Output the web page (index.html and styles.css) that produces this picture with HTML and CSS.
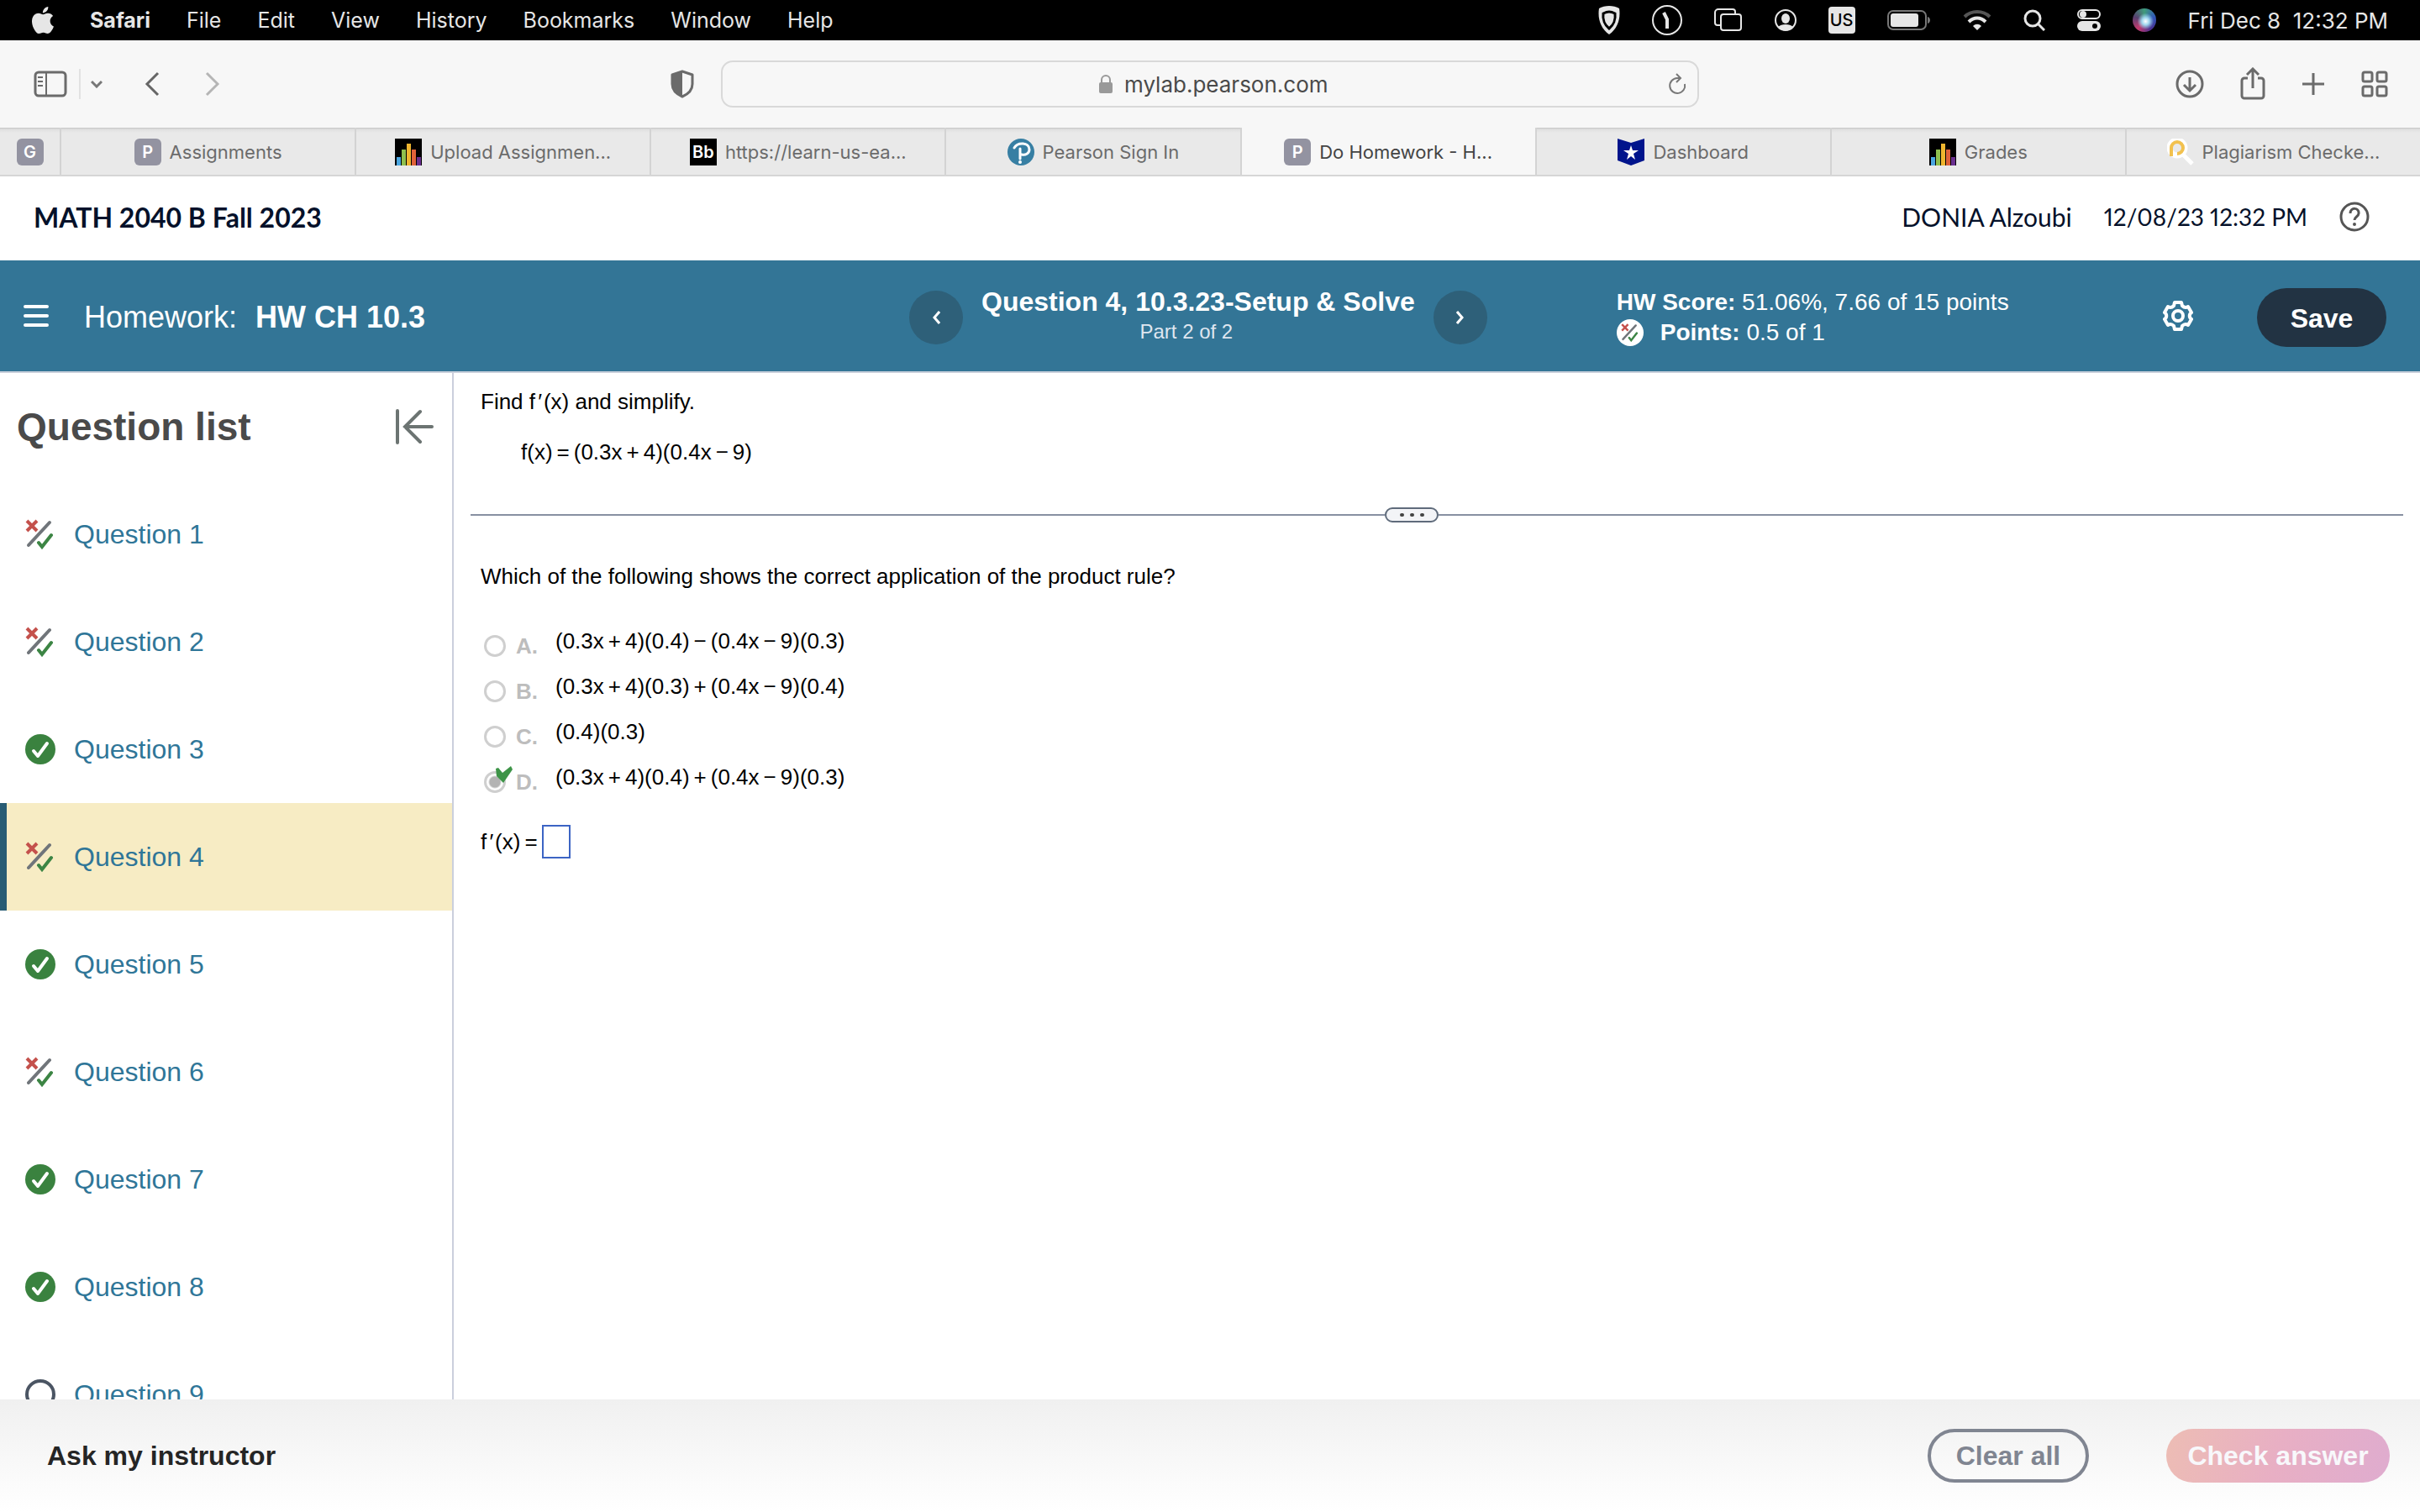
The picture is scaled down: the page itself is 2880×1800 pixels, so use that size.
FILE: index.html
```
<!DOCTYPE html>
<html lang="en">
<head>
  <meta charset="UTF-8" />
  <meta name="viewport" content="width=device-width, initial-scale=1.0" />
  <title>Do Homework - HW CH 10.3</title>
  <link rel="stylesheet" href="styles.css">
</head>
<body>
  <!-- Shared icons -->
  <svg class="sprite" aria-hidden="true">
    <symbol id="partial" viewBox="0 0 36 36">
      <g fill="none" stroke-linecap="round">
        <path d="M2 2L14 14M14 2L2 14" stroke="#c4514c" stroke-width="4" stroke-linecap="butt" />
        <path d="M29 4L4 31" stroke="#70757a" stroke-width="4" />
        <path d="M16 28L20 33L31 19" stroke="#3c8544" stroke-width="4" />
      </g>
    </symbol>
    <symbol id="correct" viewBox="0 0 36 36">
      <circle cx="18" cy="18" r="18" fill="#3a823f" />
      <path d="M10 20L15 26L26 11" fill="none" stroke="#fff" stroke-width="4" stroke-linecap="round" stroke-linejoin="round" />
    </symbol>
    <symbol id="open" viewBox="0 0 36 36">
      <circle cx="18" cy="18" r="16" fill="none" stroke="#4b5563" stroke-width="4" />
    </symbol>
    <symbol id="bars" viewBox="0 0 32 32">
      <rect width="32" height="32" fill="#000" />
      <rect x="2" y="22" width="5" height="10" fill="#4ba6e0" />
      <rect x="8" y="13" width="5" height="19" fill="#8fc04e" />
      <rect x="14" y="6" width="5" height="26" fill="#efb52f" />
      <rect x="20" y="13" width="5" height="19" fill="#e0623a" />
      <rect x="26" y="22" width="5" height="10" fill="#6a2f8f" />
    </symbol>
  </svg>

  <header class="menubar">
    <nav class="menus">
      <svg class="apple" viewBox="4 2 16 20"><path fill="#e6e6e6" d="M18.71 19.5c-.83 1.24-1.71 2.45-3.05 2.47-1.34.03-1.77-.79-3.29-.79-1.53 0-2 .77-3.27.82-1.31.05-2.3-1.32-3.14-2.53C4.25 17 2.94 12.45 4.7 9.39c.87-1.52 2.43-2.48 4.12-2.51 1.28-.02 2.5.87 3.29.87.78 0 2.26-1.07 3.81-.91.65.03 2.47.26 3.64 1.98-.09.06-2.17 1.28-2.15 3.81.03 3.02 2.65 4.03 2.68 4.04-.03.07-.42 1.44-1.38 2.83M13 3.5c.73-.83 1.94-1.46 2.94-1.5.13 1.17-.34 2.35-1.04 3.19-.69.85-1.83 1.51-2.95 1.42-.15-1.15.41-2.35 1.05-3.11z" /></svg>
      <b>Safari</b>
      <span>File</span>
      <span>Edit</span>
      <span>View</span>
      <span>History</span>
      <span>Bookmarks</span>
      <span>Window</span>
      <span>Help</span>
    </nav>
    <div class="status">
      <svg width="26" height="34" viewBox="0 0 26 34"><path d="M13 0C17 0 22 1 25 3C27 15 23 27 13 34C3 27 -1 15 1 3C4 1 9 0 13 0Z" fill="#e6e6e6" /><path d="M13 7C16 7 18 8 20 9C21 16 18 23 13 27C8 23 5 16 6 9C8 8 10 7 13 7Z" fill="#e6e6e6" stroke="#000" stroke-width="3" /></svg>
      <svg width="36" height="36" viewBox="0 0 36 36"><circle cx="18" cy="18" r="17" fill="none" stroke="#e6e6e6" stroke-width="2" /><path d="M14 9L18 17V28" fill="none" stroke="#e6e6e6" stroke-width="4" /></svg>
      <svg width="34" height="28" viewBox="0 0 34 28" fill="none" stroke="#e6e6e6" stroke-width="2"><path d="M7 20H4a3 3 0 0 1-3-3V5a4 4 0 0 1 4-4H22a3 3 0 0 1 3 3V7" /><rect x="8" y="7" width="24" height="19" rx="3" /></svg>
      <svg width="26" height="26" viewBox="0 0 26 26"><circle cx="13" cy="13" r="12" fill="none" stroke="#e6e6e6" stroke-width="2" /><ellipse cx="13" cy="11" rx="5" ry="6" fill="#e6e6e6" /><path d="M4 21C8 17 18 17 22 21C18 27 8 27 4 21Z" fill="#e6e6e6" /></svg>
      <span class="lang">US</span>
      <svg width="52" height="24" viewBox="0 0 52 24"><rect x="1" y="1" width="45" height="22" rx="6" fill="none" stroke="#777" stroke-width="2" /><rect x="4" y="4" width="33" height="16" rx="3" fill="#e6e6e6" /><path d="M48 8C52 9 52 15 48 16Z" fill="#777" /></svg>
      <svg width="34" height="26" viewBox="0 0 34 26" fill="none" stroke-width="4"><path d="M2 9C10 1 24 1 32 9" stroke="#555" /><path d="M7 15C13 9 21 9 27 15" stroke="#e6e6e6" /><path d="M12 20C15 17 19 17 22 20L17 25Z" fill="#e6e6e6" /></svg>
      <svg width="26" height="26" viewBox="0 0 26 26" fill="none" stroke="#e6e6e6"><circle cx="11" cy="11" r="9" stroke-width="3" /><path d="M18 18L25 25" stroke-width="3" /></svg>
      <svg width="28" height="28" viewBox="0 0 28 28"><rect x="1" y="2" width="26" height="10" rx="5" fill="none" stroke="#e6e6e6" stroke-width="2" /><circle cx="7" cy="7" r="4" fill="#e6e6e6" /><rect y="15" width="28" height="12" rx="6" fill="#e6e6e6" /><circle cx="21" cy="21" r="3" fill="#000" /></svg>
      <span class="siri"></span>
      <span class="clock">Fri Dec 8&nbsp; 12:32 PM</span>
    </div>
  </header>

  <div class="toolbar">
    <div class="tools">
      <button aria-label="Sidebar"><svg width="40" height="32" viewBox="0 0 40 32" fill="none" stroke="#6b6b6b" stroke-width="3"><rect x="2" y="2" width="36" height="28" rx="4" /><path d="M15 2V30M5 8H11M5 13H11M5 18H11" stroke-width="2" /></svg></button>
      <button class="split" aria-label="Tab groups"><svg width="14" height="10" viewBox="0 0 14 10" fill="none" stroke="#777" stroke-width="3"><path d="M1 2L7 8L13 2" /></svg></button>
      <button class="back" aria-label="Back"><svg width="18" height="30" viewBox="0 0 18 30" fill="none" stroke="#666" stroke-width="3"><path d="M16 2L3 15L16 28" /></svg></button>
      <button class="forward" aria-label="Forward"><svg width="18" height="30" viewBox="0 0 18 30" fill="none" stroke="#b5b5b5" stroke-width="3"><path d="M2 2L15 15L2 28" /></svg></button>
      <button class="privacy" aria-label="Privacy report"><svg width="28" height="34" viewBox="0 0 28 34"><path d="M14 2L26 6V17C26 24 21 29 14 32C7 29 2 24 2 17V6Z" fill="none" stroke="#6b6b6b" stroke-width="3" stroke-linejoin="round" /><path d="M14 2V32C7 29 2 24 2 17V6Z" fill="#6b6b6b" /></svg></button>
    </div>
    <div class="urlbar">
      <svg width="16" height="24" viewBox="0 0 16 24"><path d="M3 12V7a5 5 0 0 1 10 0V12" fill="none" stroke="#999" stroke-width="2" /><rect y="10" width="16" height="13" rx="2" fill="#999" /></svg>
      <input type="text" aria-label="Address" value="mylab.pearson.com">
      <button class="reload" aria-label="Reload"><svg width="24" height="28" viewBox="0 0 24 28" fill="none" stroke="#777" stroke-width="2"><path d="M21 14A9 9 0 1 1 12 7H15M11 2L16 7L11 12" /></svg></button>
    </div>
    <div class="tools right">
      <button aria-label="Downloads"><svg width="34" height="34" viewBox="0 0 34 34" fill="none" stroke="#6b6b6b" stroke-width="3"><circle cx="17" cy="17" r="15" /><path d="M17 9V25M10 18L17 25L24 18" /></svg></button>
      <button aria-label="Share"><svg width="30" height="40" viewBox="0 0 30 40" fill="none" stroke="#6b6b6b" stroke-width="3"><path d="M9 13H5a3 3 0 0 0-3 3V34a3 3 0 0 0 3 3H25a3 3 0 0 0 3-3V16a3 3 0 0 0-3-3H21M15 25V3M8 9L15 2L22 9" /></svg></button>
      <button aria-label="New tab"><svg width="28" height="28" viewBox="0 0 28 28" stroke="#6b6b6b" stroke-width="3"><path d="M14 1V27M1 14H27" /></svg></button>
      <button aria-label="Tab overview"><svg width="32" height="32" viewBox="0 0 32 32" fill="none" stroke="#6b6b6b" stroke-width="3"><rect x="2" y="2" width="11" height="11" rx="2" /><rect x="19" y="2" width="11" height="11" rx="2" /><rect x="2" y="19" width="11" height="11" rx="2" /><rect x="19" y="19" width="11" height="11" rx="2" /></svg></button>
    </div>
  </div>

  <nav class="tabs">
    <a class="tab pinned" href="#" aria-label="G"><span class="favicon">G</span></a>
    <a class="tab" href="#"><span class="favicon">P</span>Assignments</a>
    <a class="tab" href="#"><svg class="fav"><use href="#bars" /></svg>Upload Assignmen...</a>
    <a class="tab" href="#"><span class="favicon black">Bb</span>https://learn-us-ea...</a>
    <a class="tab" href="#"><svg class="fav" viewBox="0 0 32 32"><circle cx="16" cy="16" r="16" fill="#377fa3" /><path d="M8 11C12 4 26 4 26 13C26 18 21 20 17 19M15 12V24" fill="none" stroke="#fff" stroke-width="3" stroke-linecap="round" /><circle cx="15" cy="28" r="2" fill="#fff" /></svg>Pearson Sign In</a>
    <a class="tab active" href="#"><span class="favicon">P</span>Do Homework - H...</a>
    <a class="tab" href="#"><svg class="fav" viewBox="0 0 32 32"><path d="M0 0L16 5L32 0V26L16 32L0 26Z" fill="#00148c" /><path d="M16 8L18 14H25L19 18L21 25L16 21L11 25L13 18L7 14H14Z" fill="#fff" /></svg>Dashboard</a>
    <a class="tab" href="#"><svg class="fav"><use href="#bars" /></svg>Grades</a>
    <a class="tab" href="#"><svg class="fav" viewBox="0 0 32 32" fill="none"><path d="M18 18L30 30" stroke="#fff" stroke-width="5" /><circle cx="12" cy="11" r="9" stroke="#fff" stroke-width="7" /><path d="M5 21V11A7 7 0 1 1 12 18" stroke="#f2c14e" stroke-width="4" /></svg>Plagiarism Checke...</a>
  </nav>

  <div class="course">
    <h1>MATH 2040 B Fall 2023</h1>
    <div class="user">
      <span>DONIA Alzoubi</span>
      <span class="date">12/08/23 12:32 PM</span>
      <button aria-label="Help"><svg width="36" height="36" viewBox="0 0 36 36" fill="none" stroke="#555" stroke-width="3"><circle cx="18" cy="18" r="16" /><path d="M13 14C13 6 24 7 23 14C23 18 18 18 18 22" /><circle cx="18" cy="27" r="1" stroke-width="2" /></svg></button>
    </div>
  </div>

  <div class="hwbar">
    <div class="hw-title">
      <button class="menu" aria-label="Menu"><svg width="30" height="28" viewBox="0 0 30 28" stroke="#fff" stroke-width="4" stroke-linecap="round"><path d="M2 3H28M2 14H28M2 25H28" /></svg></button>
      <h2>Homework:<strong>HW CH 10.3</strong></h2>
    </div>
    <div class="pager">
      <button class="round" aria-label="Previous question"><svg width="10" height="16" viewBox="0 0 10 16" fill="none" stroke="#fff" stroke-width="3"><path d="M9 1L3 8L9 15" /></svg></button>
      <div class="pager-text">
        <strong>Question 4, 10.3.23-Setup &amp; Solve</strong>
        <span>Part 2 of 2</span>
      </div>
      <button class="round" aria-label="Next question"><svg width="10" height="16" viewBox="0 0 10 16" fill="none" stroke="#fff" stroke-width="3"><path d="M1 1L7 8L1 15" /></svg></button>
    </div>
    <div class="score">
      <div><b>HW Score:</b> 51.06%, 7.66 of 15 points</div>
      <div class="points"><span class="badge"><svg width="22" height="22"><use href="#partial" /></svg></span><span><b>Points:</b> 0.5 of 1</span></div>
    </div>
    <button class="gear" aria-label="Settings"><svg width="36" height="36" viewBox="0 0 36 36" fill="none" stroke="#fff" stroke-width="4" stroke-linejoin="round"><path d="M14 2H22L23 6C25 8 27 9 30 7L34 14C31 16 31 20 34 22L30 29C27 27 25 28 23 30L22 34H14L13 30C11 28 9 27 6 29L2 22C5 20 5 16 2 14L6 7C9 9 11 8 13 6Z" /><circle cx="18" cy="18" r="6" /></svg></button>
    <button class="save">Save</button>
  </div>

  <div class="workspace">
    <aside class="sidebar">
      <div class="sidebar-head">
        <h2>Question list</h2>
        <button aria-label="Collapse"><svg width="46" height="42" viewBox="0 0 46 42" fill="none" stroke="#6c7472" stroke-width="4" stroke-linecap="round"><path d="M3 2V40M30 3L12 21L30 39M12 21H44" /></svg></button>
      </div>
      <ul>
        <li><svg><use href="#partial" /></svg><a href="#">Question 1</a></li>
        <li><svg><use href="#partial" /></svg><a href="#">Question 2</a></li>
        <li><svg><use href="#correct" /></svg><a href="#">Question 3</a></li>
        <li class="current"><svg><use href="#partial" /></svg><a href="#">Question 4</a></li>
        <li><svg><use href="#correct" /></svg><a href="#">Question 5</a></li>
        <li><svg><use href="#partial" /></svg><a href="#">Question 6</a></li>
        <li><svg><use href="#correct" /></svg><a href="#">Question 7</a></li>
        <li><svg><use href="#correct" /></svg><a href="#">Question 8</a></li>
        <li><svg><use href="#open" /></svg><a href="#">Question 9</a></li>
      </ul>
    </aside>

    <main class="exercise">
      <p>Find f<em>′</em>(x) and simplify.</p>
      <p class="equation">f(x)<i>=</i>(0.3x<i>+</i>4)(0.4x<i>−</i>9)</p>
      <div class="divider"><button aria-label="Resize"><span></span><span></span><span></span></button></div>
      <p>Which of the following shows the correct application of the product rule?</p>
      <div class="choices">
        <div class="choice"><input type="radio" name="rule" id="a" disabled><b>A.</b><label for="a">(0.3x<i>+</i>4)(0.4)<i>−</i>(0.4x<i>−</i>9)(0.3)</label></div>
        <div class="choice"><input type="radio" name="rule" id="b" disabled><b>B.</b><label for="b">(0.3x<i>+</i>4)(0.3)<i>+</i>(0.4x<i>−</i>9)(0.4)</label></div>
        <div class="choice"><input type="radio" name="rule" id="c" disabled><b>C.</b><label for="c">(0.4)(0.3)</label></div>
        <div class="choice"><input type="radio" name="rule" id="d" disabled checked><svg class="tick" viewBox="0 0 20 20"><path d="M0 3L3 2L8 8L18 0L20 4L9 20L1 12Z" fill="#3d9447" /></svg><b>D.</b><label for="d">(0.3x<i>+</i>4)(0.4)<i>+</i>(0.4x<i>−</i>9)(0.3)</label></div>
      </div>
      <div class="answer">
        <label for="answer">f<em>′</em>(x)<i>=</i></label>
        <input type="text" id="answer">
      </div>
    </main>
  </div>

  <footer class="actions">
    <button class="ask">Ask my instructor</button>
    <button class="clear">Clear all</button>
    <button class="check">Check answer</button>
  </footer>
</body>
</html>
```

FILE: styles.css
```
* {
  box-sizing: border-box;
}
body {
  margin: 0;
  height: 100vh;
  display: flex;
  flex-direction: column;
  overflow: hidden;
  background: #fff;
  color: #000;
  font-family: "Liberation Sans", Arial, sans-serif;
  font-size: 26px;
}
h1, h2, p, ul {
  margin: 0;
  padding: 0;
}
button {
  padding: 0;
  border: 0;
  background: none;
  font: inherit;
  color: inherit;
}
a {
  color: inherit;
  text-decoration: none;
}
svg {
  display: block;
  flex: none;
}
.sprite {
  position: absolute;
  width: 0;
  height: 0;
}

/* macOS menu bar */
.menubar {
  flex: none;
  height: 48px;
  padding: 0 38px;
  display: flex;
  justify-content: space-between;
  align-items: center;
  background: #000;
  color: #e6e6e6;
  font-family: Inter, sans-serif;
  font-size: 25px;
  white-space: nowrap;
}
.menus, .status {
  display: flex;
  align-items: center;
}
.menus {
  gap: 43px;
}
.status {
  gap: 38px;
}
.clock {
  font-size: 26px;
}
.apple {
  width: 26px;
  height: 32px;
}
.lang {
  width: 32px;
  border-radius: 4px;
  background: #e6e6e6;
  color: #000;
  font-size: 20px;
  font-weight: 500;
  line-height: 32px;
  text-align: center;
}
.siri {
  width: 28px;
  height: 28px;
  border-radius: 50%;
  background: radial-gradient(circle at 55% 55%, #fff 0, #9fd8ee 20%, transparent 45%), conic-gradient(#3f9c7c, #3158b8, #4a2f8f, #c23b6e, #57406f, #3f9c7c);
}

/* Safari toolbar */
.toolbar {
  flex: none;
  height: 104px;
  display: grid;
  grid-template-columns: 14fr 19fr 14fr;
  align-items: center;
  background: #f7f7f7;
}
.tools {
  display: flex;
  align-items: center;
  padding: 0 32px 0 40px;
}
.split {
  height: 36px;
  margin-left: 14px;
  padding-left: 12px;
  border-left: 2px solid #e2e2e2;
}
.back {
  margin-left: 50px;
}
.forward {
  margin-left: 54px;
}
.privacy {
  margin-left: auto;
}
.right {
  justify-content: flex-end;
  gap: 43px;
  padding-right: 38px;
}
.urlbar {
  position: relative;
  height: 56px;
  display: flex;
  align-items: center;
  justify-content: center;
  gap: 14px;
  border: 2px solid #d9d9d9;
  border-radius: 14px;
}
.urlbar input {
  width: 248px;
  margin-right: -14px;
  padding: 0;
  border: 0;
  background: none;
  color: #4a4a4a;
  font: 26px Inter, sans-serif;
}
.reload {
  position: absolute;
  right: 12px;
}

/* Tabs */
.tabs {
  flex: none;
  height: 58px;
  display: flex;
  border-bottom: 2px solid #d6d6d6;
  font: 22px Inter, sans-serif;
  color: #6b6b6b;
}
.tab {
  flex: 1;
  display: flex;
  align-items: center;
  justify-content: center;
  gap: 10px;
  padding-top: 2px;
  border-right: 2px solid #d3d3d3;
  background: linear-gradient(#c4c4c4, #dfdfdf 2px, #e9e9e9 6px);
  white-space: nowrap;
}
.tab:last-child {
  border-right: 0;
}
.pinned {
  flex: 0 0 73px;
}
.active {
  background: #f7f7f7;
  color: #444;
}
.fav, .favicon {
  width: 32px;
  height: 32px;
}
.favicon {
  border-radius: 6px;
  background: #9393a1;
  color: #fff;
  font-size: 20px;
  font-weight: 600;
  line-height: 32px;
  text-align: center;
}
.black {
  border-radius: 0;
  background: #000;
}

/* Course header */
.course {
  flex: none;
  height: 100px;
  padding: 0 60px 4px 40px;
  display: flex;
  align-items: center;
  justify-content: space-between;
  color: #05112a;
  font-family: Lato, sans-serif;
  font-size: 30px;
}
.course h1 {
  font-size: 32px;
  font-weight: 700;
}
.user {
  display: flex;
  align-items: center;
  gap: 38px;
}
.date {
  font-size: 28px;
  font-variant-numeric: proportional-nums;
}

/* Homework bar */
.hwbar {
  flex: none;
  height: 134px;
  display: flex;
  align-items: center;
  padding-top: 4px;
  border-bottom: 2px solid #c9cfdb;
  background: #337596;
  color: #fff;
  font-size: 28px;
}
.hw-title {
  flex: 0 0 1082px;
  display: flex;
  align-items: center;
  gap: 42px;
  padding-left: 28px;
}
.menu, .gear {
  padding-bottom: 4px;
}
.hw-title h2 {
  display: flex;
  gap: 22px;
  font-size: 36px;
  font-weight: 400;
}
.pager {
  display: flex;
  align-items: center;
  gap: 22px;
}
.round {
  width: 64px;
  height: 64px;
  display: flex;
  align-items: center;
  justify-content: center;
  border-radius: 50%;
  background: #2e6079;
}
.pager-text {
  display: flex;
  flex-direction: column;
  align-items: center;
  padding-bottom: 4px;
  font-size: 32px;
  line-height: 38px;
}
.pager-text span {
  padding-right: 28px;
  color: #dfe6f0;
  font-size: 24px;
  line-height: 34px;
}
.score {
  margin-left: 154px;
  line-height: 36px;
}
.points {
  display: flex;
  align-items: center;
  gap: 20px;
}
.badge {
  width: 32px;
  height: 32px;
  display: flex;
  align-items: center;
  justify-content: center;
  border-radius: 50%;
  background: #fff;
}
.gear {
  margin-left: auto;
}
.save {
  width: 154px;
  height: 70px;
  margin: 0 40px 0 76px;
  padding-top: 2px;
  border-radius: 35px;
  background: #223343;
  font-size: 32px;
  font-weight: 700;
}

/* Question list */
.workspace {
  flex: 1;
  min-height: 0;
  display: flex;
}
.sidebar {
  flex: 0 0 540px;
  overflow: hidden;
  border-right: 2px solid #cbcfdd;
}
.sidebar-head {
  height: 128px;
  display: flex;
  align-items: center;
  justify-content: space-between;
  padding: 0 22px 0 20px;
}
.sidebar-head h2 {
  color: #4a4a4a;
  font-size: 46px;
}
.sidebar ul {
  list-style: none;
}
.sidebar li {
  height: 128px;
  display: flex;
  align-items: center;
  gap: 22px;
  padding-left: 22px;
  border-left: 8px solid transparent;
  color: #2f7698;
  font-size: 32px;
}
.sidebar li svg {
  width: 36px;
  height: 36px;
}
.sidebar .current {
  border-left-color: #285c74;
  background: #f7ecc4;
}

/* Exercise */
.exercise {
  flex: 1;
  padding: 18px 20px;
  line-height: 32px;
}
.exercise p {
  padding-left: 12px;
}
.exercise i {
  margin: 0 5px;
  font-style: normal;
}
.exercise em {
  margin: 0 3px 0 2px;
}
.exercise .equation {
  margin-top: 28px;
  padding-left: 60px;
}
.divider {
  display: flex;
  align-items: center;
  margin: 50px 0 48px;
}
.divider::before, .divider::after {
  content: "";
  flex: 109;
  height: 2px;
  background: #8790a2;
}
.divider::after {
  flex: 115;
}
.divider button {
  width: 64px;
  height: 18px;
  display: flex;
  align-items: center;
  justify-content: center;
  gap: 7px;
  border: 2px solid #5f6b7b;
  border-radius: 9px;
  background: #f3f4f7;
}
.divider span {
  width: 5px;
  height: 4px;
  border-radius: 2px;
  background: #444;
}
.choices {
  margin: 40px 0 24px;
  padding-left: 16px;
}
.choice {
  position: relative;
  height: 54px;
  display: flex;
  align-items: center;
}
.choice input {
  appearance: none;
  width: 26px;
  height: 26px;
  margin: 0 12px 0 0;
  border: 3px solid #cfcfcf;
  border-radius: 50%;
}
.choice input:checked {
  background: radial-gradient(circle, #b3b3b3 6px, transparent 8px);
}
.choice b {
  width: 47px;
  color: #bdbdbd;
}
.choice label {
  padding-bottom: 12px;
}
.tick {
  position: absolute;
  left: 14px;
  top: 8px;
  width: 20px;
  height: 20px;
}
.answer {
  display: flex;
  align-items: center;
  padding-left: 12px;
}
.answer input {
  width: 34px;
  height: 40px;
  padding: 0;
  border: 2px solid #3c64c4;
}

/* Footer actions */
.actions {
  flex: none;
  height: 134px;
  display: flex;
  align-items: center;
  padding: 0 36px 0 56px;
  background: linear-gradient(#f0f0f0, #fff);
  font-size: 32px;
}
.actions button {
  font-weight: 700;
}
.ask {
  margin-right: auto;
  color: #252525;
}
.clear, .check {
  height: 64px;
  border-radius: 32px;
}
.actions .clear {
  width: 192px;
  margin-right: 92px;
  border: 4px solid #808591;
  color: #808591;
}
.check {
  width: 266px;
  background: linear-gradient(105deg, #edbdb4, #e8afc4 50%, #dfaccf);
  color: #f8f8fb;
}
```
